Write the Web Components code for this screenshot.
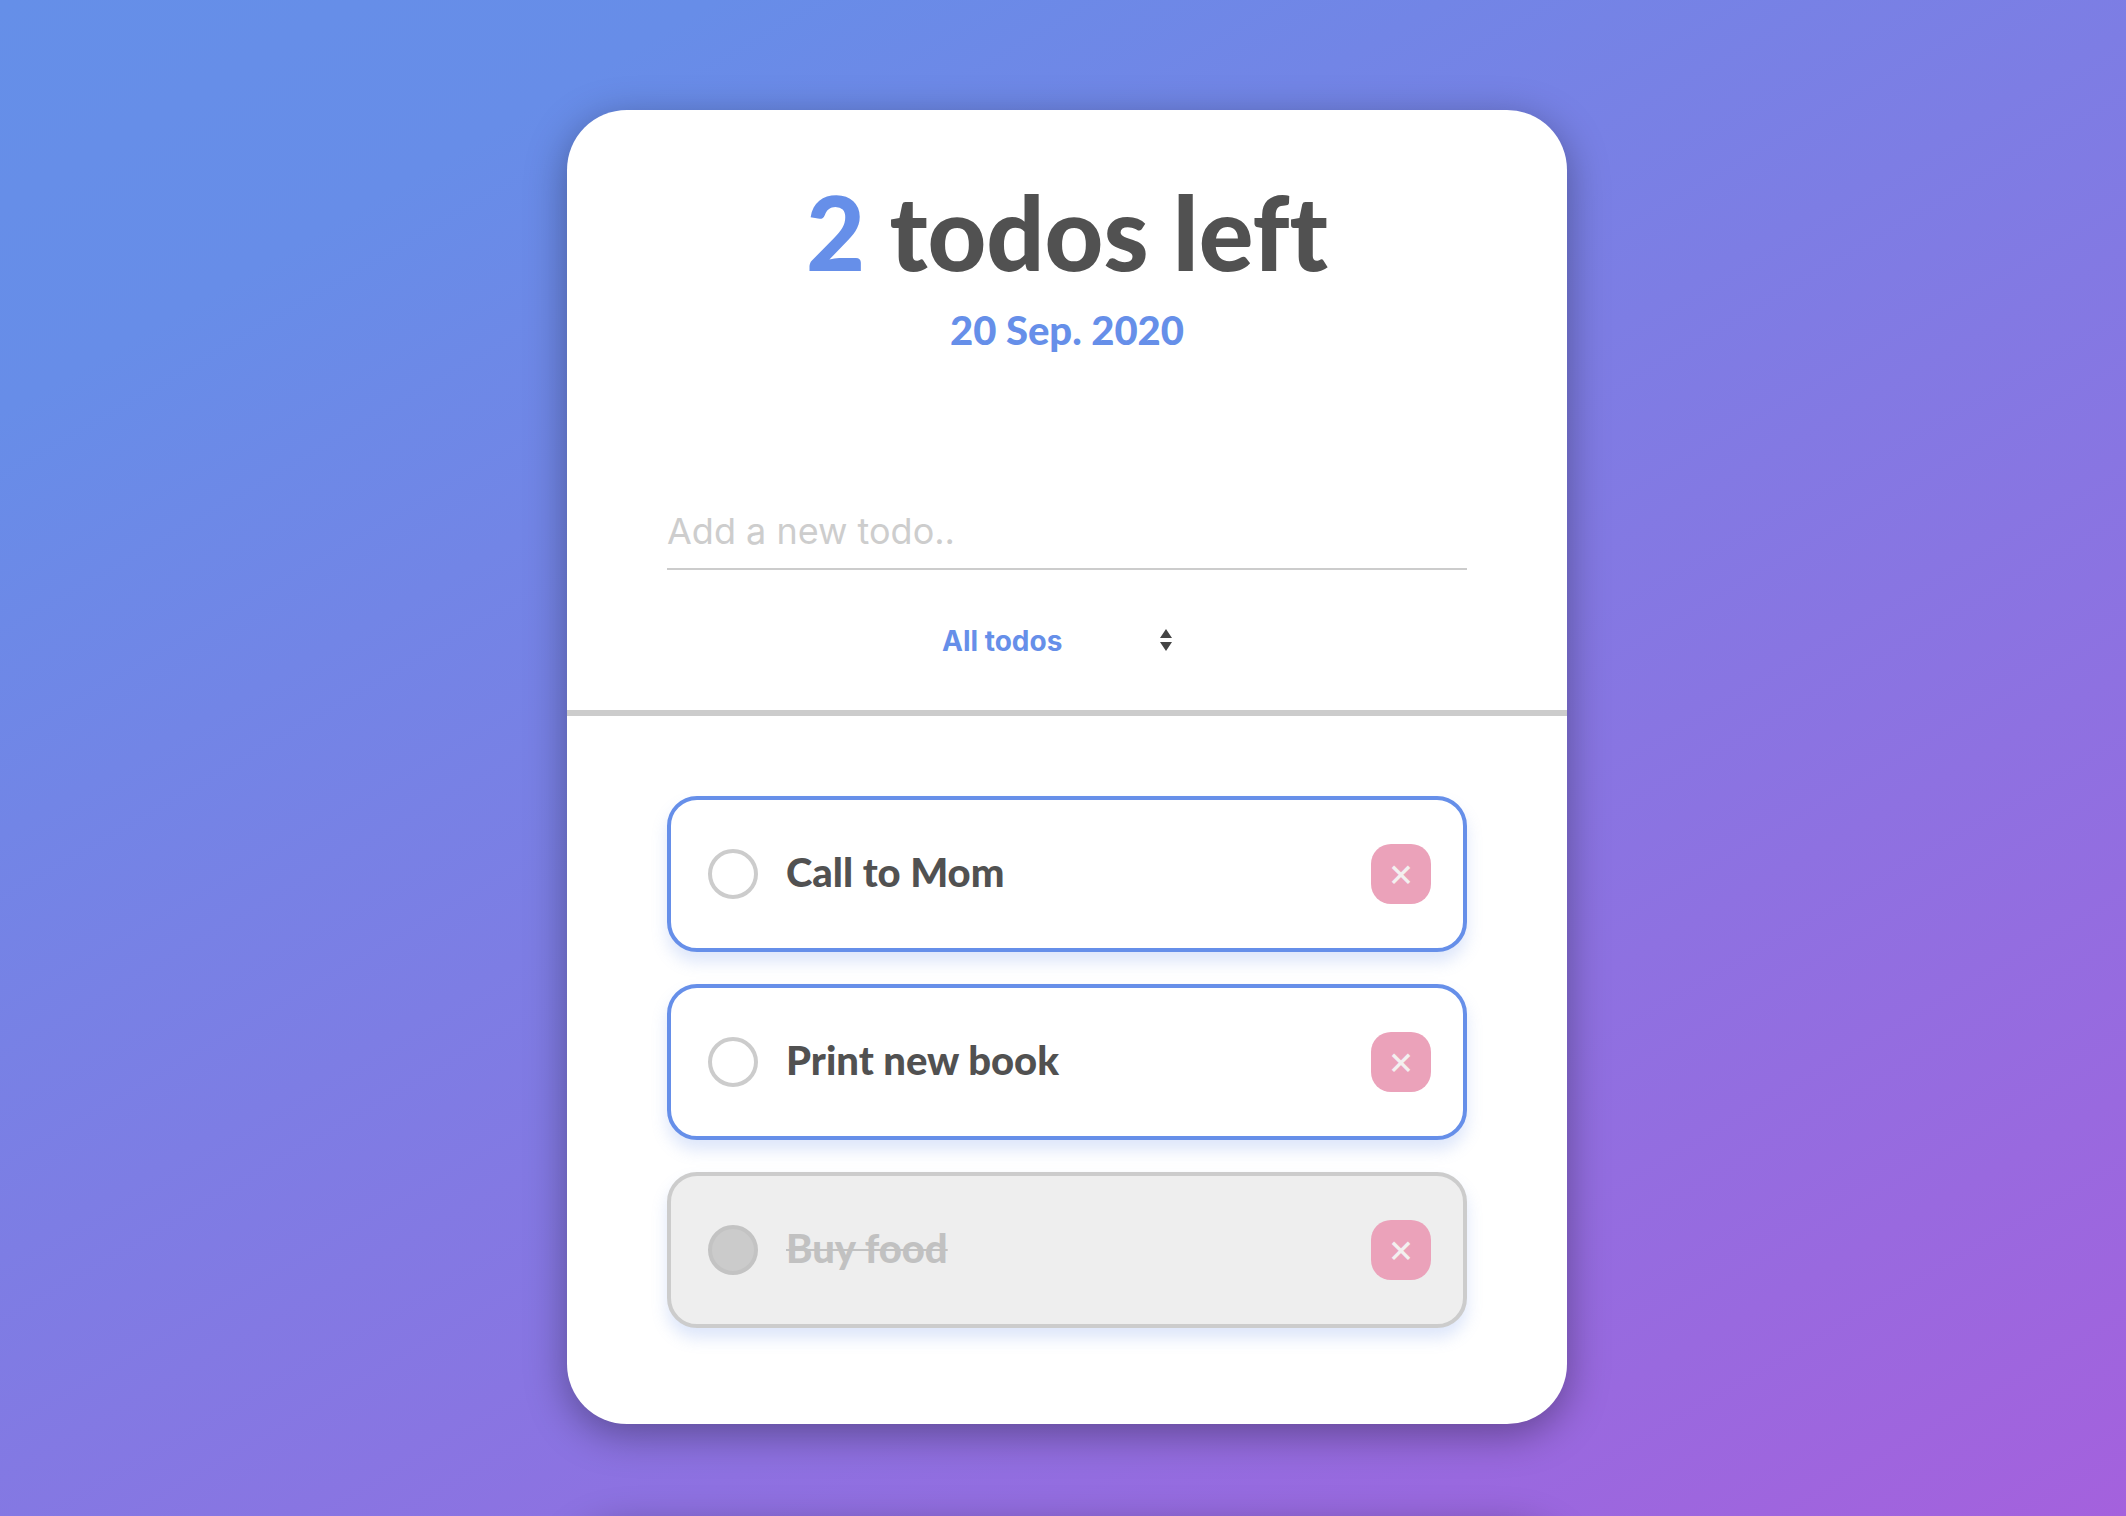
<!DOCTYPE html>
<html lang="en">
<head>
<meta charset="utf-8">
<title>Todos</title>
<style>
  :root {
    --blue: #668fe9;
    --ink: #515151;
    --line: #cccccc;
    --display: Lato, "Liberation Sans", sans-serif;
    --ui: Inter, "Liberation Sans", sans-serif;
    --card-shadow: 0 10px 40px rgba(0, 0, 0, .35);
  }
  body { margin: 0; }
</style>
</head>
<body>
<todo-app>
  <todo-card>
    <todo-header slot="header" count="2">20 Sep. 2020</todo-header>
    <todo-entry slot="header"></todo-entry>
    <todo-filter slot="header"></todo-filter>
    <todo-item>Call to Mom</todo-item>
    <todo-item>Print new book</todo-item>
    <todo-item done>Buy food</todo-item>
  </todo-card>
  <next-card></next-card>
</todo-app>

<script>
const define = (name, html, setup) => customElements.define(name, class extends HTMLElement {
  connectedCallback() {
    if (this.shadowRoot) return;
    this.attachShadow({ mode: 'open' }).innerHTML = '<style>*{box-sizing:border-box}</style>' + html;
    if (setup) setup(this, this.shadowRoot);
  }
});

define('todo-app', `
  <style>
    :host {
      box-sizing: border-box; display: flex; flex-direction: column; align-items: center; gap: 96px;
      height: 100vh; overflow-y: auto; scrollbar-width: none;
      padding: 110px 0 110px 8px; color: var(--ink); font-family: var(--display);
      background: linear-gradient(150deg, #658fe8, #678de8 15%, #a461dd);
    }
    ::slotted(*) { flex: none; width: min(1000px, 94%); }
  </style>
  <slot></slot>`);

define('todo-card', `
  <style>
    :host { display: block; background: #fff; border-radius: 60px; box-shadow: var(--card-shadow); }
    header { display: flex; flex-direction: column; padding: 66px 100px 38px; border-bottom: 6px solid var(--line); }
    main { display: flex; flex-direction: column; gap: 32px; padding: 80px 100px 96px; }
  </style>
  <header><slot name="header"></slot></header>
  <main><slot></slot></main>`);

define('next-card', `
  <style>
    :host { display: block; height: 120px; background: #fff; border-radius: 60px; box-shadow: var(--card-shadow); }
  </style>`);

define('todo-header', `
  <style>
    :host { display: block; text-align: center; padding-bottom: 136px; }
    h1 { margin: 0; font-size: 102px; line-height: 112px; font-weight: 900; font-variant-ligatures: none; }
    span, p { color: var(--blue); }
    p { margin: 14px 0 0; font-size: 40px; line-height: 56px; font-weight: 900; }
  </style>
  <h1><span></span> todos left</h1>
  <p><slot></slot></p>`,
  (host, root) => { root.querySelector('span').textContent = host.getAttribute('count'); });

define('todo-entry', `
  <style>
    :host { display: block; }
    input {
      display: block; width: 100%; height: 76px; padding: 0; border: 0; border-bottom: 2px solid var(--line);
      font: 400 36px var(--ui); color: var(--ink); background: none; outline: 0;
    }
    input::placeholder { color: #cdcdcd; opacity: 1; }
  </style>
  <input type="text" placeholder="Add a new todo.." aria-label="New todo">`);

define('todo-filter', `
  <style>
    :host { display: grid; justify-content: center; grid-template-columns: 250px; padding-top: 40px; }
    select, svg { grid-area: 1 / 1; }
    select {
      appearance: none; height: 62px; padding: 0; border: 0; background: none;
      font: 700 28px var(--ui); color: var(--blue);
    }
    svg { justify-self: end; align-self: center; margin-right: 20px; pointer-events: none; fill: #444; }
  </style>
  <select aria-label="Show">
    <option>All todos</option><option>Active</option><option>Completed</option>
  </select>
  <svg width="12" height="24" viewBox="0 0 12 24"><path d="M6 0L12 9H0zM0 13h12L6 22z"/></svg>`);

define('todo-item', `
  <style>
    :host {
      box-sizing: border-box; display: flex; align-items: center; gap: 28px; height: 156px; padding: 0 32px 0 37px;
      border: 4px solid var(--blue); border-radius: 30px; background: #fff;
      box-shadow: 0 10px 16px rgba(102, 143, 233, .22);
    }
    input { appearance: none; flex: none; width: 50px; height: 50px; margin: 0; border: 4px solid var(--line); border-radius: 50%; }
    label { flex: 1; padding-bottom: 4px; font-size: 40px; line-height: 56px; font-weight: 900; }
    button {
      width: 60px; height: 60px; padding: 0 0 4px; border: 0; border-radius: 20px;
      background: #eba2ba; color: #f3f0f0; font: 400 40px/56px var(--ui);
    }
    :host([done]) { background: #eeeeee; border-color: var(--line); }
    :host([done]) input { background: #cbcbcb; border-color: #c3c3c3; }
    :host([done]) label { color: #c1c1c1; text-decoration: line-through; text-decoration-thickness: 2px; }
  </style>
  <input type="checkbox" id="done">
  <label for="done"><slot></slot></label>
  <button type="button" aria-label="Delete">×</button>`,
  (host, root) => {
    const box = root.querySelector('input');
    box.checked = host.hasAttribute('done');
    box.addEventListener('change', () => host.toggleAttribute('done', box.checked));
    root.querySelector('button').addEventListener('click', () => host.remove());
  });
</script>
</body>
</html>
